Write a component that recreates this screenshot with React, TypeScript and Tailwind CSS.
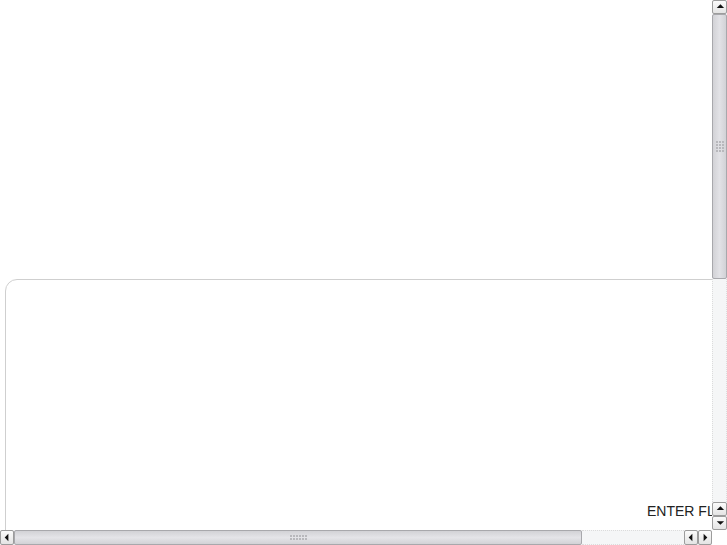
import React from 'react';

function ArrowBtn({ dir }: { dir: 'up' | 'down' | 'left' | 'right' }) {
  const tri =
    dir === 'up'
      ? 'M3.5 7.5 L7.5 3.5 L11.5 7.5 Z'
      : dir === 'down'
      ? 'M3.5 4.5 L7.5 8.5 L11.5 4.5 Z'
      : dir === 'left'
      ? 'M8 2.5 L4 6.5 L8 10.5 Z'
      : 'M5 2.5 L9 6.5 L5 10.5 Z';
  const box = dir === 'up' || dir === 'down' ? 'w-[15px] h-[14px]' : 'w-[14px] h-[15px]';
  return (
    <div className={`${box} shrink-0 rounded-[2px] border border-[#9c9c9c] bg-gradient-to-b from-[#fbfbfb] to-[#e4e4e4] flex items-center justify-center`}>
      <svg width="13" height="13" viewBox="0 0 13 13" className={dir === 'up' || dir === 'down' ? 'w-[15px] h-[12px]' : ''}>
        <path d={tri} fill="#111" />
      </svg>
    </div>
  );
}

function Grip({ vertical }: { vertical?: boolean }) {
  const dots = Array.from({ length: 12 });
  return (
    <div className={vertical ? 'grid grid-cols-3 gap-[1px]' : 'grid grid-cols-6 gap-[1px]'}>
      {dots.map((_, i) => (
        <span key={i} className="w-[2px] h-[2px] bg-[#b8b8bc]" />
      ))}
    </div>
  );
}

function VScroll() {
  return (
    <div className="w-[15px] h-full flex flex-col bg-[#f3f3f5]">
      <ArrowBtn dir="up" />
      <div className="h-[265px] border border-[#a8a8ac] rounded-[2px] bg-gradient-to-r from-[#d2d2d6] via-[#e2e2e6] to-[#d2d2d6] flex items-center justify-center">
        <Grip vertical />
      </div>
      <div className="flex-1 border-x border-dotted border-[#dcdcdc] bg-[#f5f6f7]" />
      <ArrowBtn dir="up" />
      <ArrowBtn dir="down" />
    </div>
  );
}

function HScroll() {
  return (
    <div className="h-[15px] w-[712px] flex bg-[#f3f3f5]">
      <ArrowBtn dir="left" />
      <div className="w-[568px] border border-[#a8a8ac] rounded-[2px] bg-gradient-to-b from-[#d2d2d6] via-[#e4e4e8] to-[#d2d2d6] flex items-center justify-center">
        <Grip />
      </div>
      <div className="flex-1 border-y border-dotted border-[#dcdcdc] bg-[#f5f6f7]" />
      <ArrowBtn dir="left" />
      <ArrowBtn dir="right" />
    </div>
  );
}

export default function App() {
  return (
    <div className="w-[727px] h-[545px] flex flex-col bg-white overflow-hidden" style={{ fontFamily: '"Liberation Sans", Arial, sans-serif' }}>
      <div className="flex h-[530px]">
        <div className="w-[712px] h-full overflow-hidden">
          <div className="mt-[279px] ml-[5px] w-[900px] h-[400px] border border-[#cfcfcf] rounded-[12px]">
            <div className="pt-[221px] pl-[641px] text-[14px] text-[#222] whitespace-nowrap">ENTER FLIGHT</div>
          </div>
        </div>
        <VScroll />
      </div>
      <div className="flex">
        <HScroll />
        <div className="w-[15px] h-[15px] bg-white" />
      </div>
    </div>
  );
}
